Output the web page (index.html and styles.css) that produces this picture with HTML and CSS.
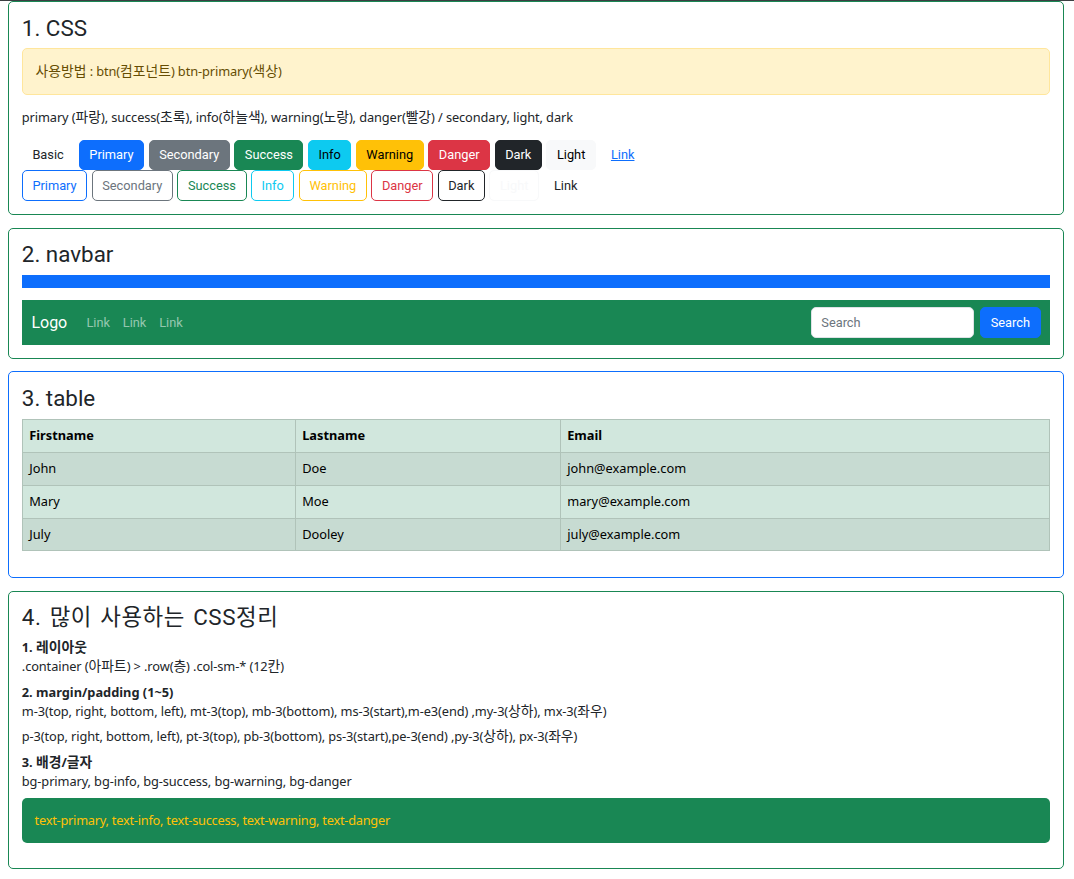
FILE: index.html
```html
<!DOCTYPE html>
<html lang="ko">
<head>
<meta charset="utf-8">
<title>Bootstrap 정리</title>
<link rel="stylesheet" href="styles.css">
</head>
<body>
<div class="topline"></div>
<div class="page">
  <section class="box box-success">
    <h3 class="title">1. CSS</h3>
    <div class="alert"><span class="ko">사용방법</span> : btn(<span class="ko">컴포넌트</span>) btn-primary(<span class="ko">색상</span>)</div>
    <p class="para">primary (<span class="ko">파랑</span>), success(<span class="ko">초록</span>), info(<span class="ko">하늘색</span>), warning(<span class="ko">노랑</span>), danger(<span class="ko">빨강</span>) / secondary, light, dark</p>
    <div class="btn-row">
      <button class="btn">Basic</button>
      <button class="btn btn-primary">Primary</button>
      <button class="btn btn-secondary">Secondary</button>
      <button class="btn btn-success">Success</button>
      <button class="btn btn-info">Info</button>
      <button class="btn btn-warning">Warning</button>
      <button class="btn btn-danger">Danger</button>
      <button class="btn btn-dark">Dark</button>
      <button class="btn btn-light">Light</button>
      <button class="btn btn-link">Link</button>
    </div>
    <div class="btn-row">
      <button class="btn btn-outline-primary">Primary</button>
      <button class="btn btn-outline-secondary">Secondary</button>
      <button class="btn btn-outline-success">Success</button>
      <button class="btn btn-outline-info">Info</button>
      <button class="btn btn-outline-warning">Warning</button>
      <button class="btn btn-outline-danger">Danger</button>
      <button class="btn btn-outline-dark">Dark</button>
      <button class="btn btn-outline-light">Light</button>
      <button class="btn">Link</button>
    </div>
  </section>

  <section class="box box-success">
    <h3 class="title">2. navbar</h3>
    <nav class="navbar navbar-blue"></nav>
    <nav class="navbar navbar-green">
      <div class="nav-left">
        <a class="brand" href="#">Logo</a>
        <ul class="nav-links">
          <li><a class="nav-link" href="#">Link</a></li>
          <li><a class="nav-link" href="#">Link</a></li>
          <li><a class="nav-link" href="#">Link</a></li>
        </ul>
      </div>
      <form class="search">
        <input class="search-input" type="text" placeholder="Search">
        <button class="btn btn-primary" type="button">Search</button>
      </form>
    </nav>
  </section>

  <section class="box box-primary">
    <h3 class="title">3. table</h3>
    <table class="table">
      <colgroup>
        <col class="col-first">
        <col class="col-last">
        <col class="col-email">
      </colgroup>
      <thead>
        <tr><th>Firstname</th><th>Lastname</th><th>Email</th></tr>
      </thead>
      <tbody>
        <tr class="striped"><td>John</td><td>Doe</td><td>john@example.com</td></tr>
        <tr><td>Mary</td><td>Moe</td><td>mary@example.com</td></tr>
        <tr class="striped"><td>July</td><td>Dooley</td><td>july@example.com</td></tr>
      </tbody>
    </table>
  </section>

  <section class="box box-success">
    <h3 class="title title-ko">4. 많이 사용하는 CSS정리</h3>
    <p class="note"><b>1. <span class="ko">레이아웃</span></b><br>.container (<span class="ko">아파트</span>) &gt; .row(<span class="ko">층</span>) .col-sm-* (12<span class="ko">칸</span>)</p>
    <p class="note"><b>2. margin/padding (1~5)</b><br>m-3(top, right, bottom, left), mt-3(top), mb-3(bottom), ms-3(start),m-e3(end) ,my-3(<span class="ko">상하</span>), mx-3(<span class="ko">좌우</span>)</p>
    <p class="note">p-3(top, right, bottom, left), pt-3(top), pb-3(bottom), ps-3(start),pe-3(end) ,py-3(<span class="ko">상하</span>), px-3(<span class="ko">좌우</span>)</p>
    <p class="note"><b>3. <span class="ko">배경</span>/<span class="ko">글자</span></b><br>bg-primary, bg-info, bg-success, bg-warning, bg-danger</p>
    <div class="color-box">text-primary, text-info, text-success, text-warning, text-danger</div>
  </section>
</div>
</body>
</html>
```

FILE: styles.css
```css
* {
  box-sizing: border-box;
}

html, body {
  margin: 0;
  padding: 0;
  background: #fff;
}

body {
  font-family: "Noto Sans", "Noto Sans CJK KR", sans-serif;
  font-size: 12.8px;
  line-height: 19.2px;
  color: #212529;
}

.ko {
  font-family: "Noto Sans CJK KR", sans-serif;
  font-size: 1.08em;
  line-height: 1;
  letter-spacing: 0;
}

.topline {
  height: 1px;
  background: #3b3f42;
}

.page {
  display: flex;
  flex-direction: column;
  gap: 12.6px;
  padding: 0 10px 0 8px;
}

.box {
  width: 1056px;
  border: 1px solid #198754;
  border-radius: 5px;
  padding: 12.8px;
}

.box-primary {
  border-color: #0d6efd;
}

.title {
  margin: 0 0 6.4px;
  font-family: "Roboto", "Noto Sans CJK KR", sans-serif;
  font-size: 22.4px;
  line-height: 26.88px;
  font-weight: 400;
  color: #212529;
}

.title-ko {
  word-spacing: 2px;
  letter-spacing: 0.6px;
}

.alert {
  background: #fff3cd;
  border: 1px solid #ffe69c;
  color: #664d03;
  border-radius: 5px;
  padding: 12.8px;
  margin-bottom: 12.8px;
  letter-spacing: -0.1px;
}

.para {
  margin: 0 0 12.8px;
  letter-spacing: -0.1px;
}

.btn-row {
  display: flex;
  gap: 4.4px;
}

.btn {
  font-family: "Roboto", "Noto Sans CJK KR", sans-serif;
  font-size: 12.8px;
  line-height: 19.2px;
  padding: 4.8px 9.6px;
  border: 1px solid transparent;
  border-radius: 5px;
  background: transparent;
  color: #212529;
  cursor: pointer;
}

.btn-primary { background: #0d6efd; border-color: #0d6efd; color: #fff; }
.btn-secondary { background: #6c757d; border-color: #6c757d; color: #fff; }
.btn-success { background: #198754; border-color: #198754; color: #fff; }
.btn-info { background: #0dcaf0; border-color: #0dcaf0; color: #000; }
.btn-warning { background: #ffc107; border-color: #ffc107; color: #000; }
.btn-danger { background: #dc3545; border-color: #dc3545; color: #fff; }
.btn-dark { background: #212529; border-color: #212529; color: #fff; }
.btn-light { background: #f8f9fa; border-color: #f8f9fa; color: #000; }
.btn-link { color: #0d6efd; text-decoration: underline; }

.btn-outline-primary { border-color: #0d6efd; color: #0d6efd; }
.btn-outline-secondary { border-color: #6c757d; color: #6c757d; }
.btn-outline-success { border-color: #198754; color: #198754; }
.btn-outline-info { border-color: #0dcaf0; color: #0dcaf0; }
.btn-outline-warning { border-color: #ffc107; color: #ffc107; }
.btn-outline-danger { border-color: #dc3545; color: #dc3545; }
.btn-outline-dark { border-color: #212529; color: #212529; }
.btn-outline-light { border-color: #f8f9fa; color: #f8f9fa; }

.navbar {
  display: flex;
  align-items: center;
  justify-content: space-between;
}

.navbar-blue {
  background: #0d6efd;
  height: 12.8px;
  margin-bottom: 12.8px;
}

.navbar-green {
  background: #198754;
  padding: 6.4px 9.6px;
  height: 44.8px;
  font-family: "Roboto", sans-serif;
}

.nav-left {
  display: flex;
  align-items: center;
}

.brand {
  font-size: 16px;
  line-height: 24px;
  padding: 4px 0;
  margin-right: 12.8px;
  color: #fff;
  text-decoration: none;
}

.nav-links {
  display: flex;
  list-style: none;
  margin: 0;
  padding: 0;
}

.nav-link {
  display: block;
  padding: 6.4px;
  color: rgba(255, 255, 255, 0.55);
  text-decoration: none;
}

.search {
  display: flex;
  align-items: center;
  margin: 0;
}

.search-input {
  width: 163px;
  height: 30.8px;
  margin-right: 6.4px;
  padding: 4.8px 9.6px;
  font-family: "Roboto", sans-serif;
  font-size: 12.8px;
  line-height: 19.2px;
  border: 1px solid #dee2e6;
  border-radius: 5px;
  background: #fff;
  color: #212529;
}

.search-input::placeholder {
  color: #6c757d;
}

.table {
  width: 100%;
  border-collapse: collapse;
  table-layout: fixed;
  margin-bottom: 12.8px;
  background: #d1e7dd;
  color: #000;
}

.col-first { width: 273px; }
.col-last { width: 265px; }
.col-email { width: auto; }

.table th,
.table td {
  border: 1px solid #b0c3b9;
  padding: 6.4px;
  text-align: left;
}

.table th {
  font-weight: 700;
}

.table .striped td {
  background: #c7dbd2;
}

.note {
  margin: 0 0 6.4px;
  letter-spacing: -0.1px;
}

.note b {
  font-weight: 700;
  letter-spacing: 0;
}

.color-box {
  background: #198754;
  color: #ffc107;
  border-radius: 5px;
  padding: 12.8px;
  margin-bottom: 12.8px;
  letter-spacing: -0.25px;
}
```
